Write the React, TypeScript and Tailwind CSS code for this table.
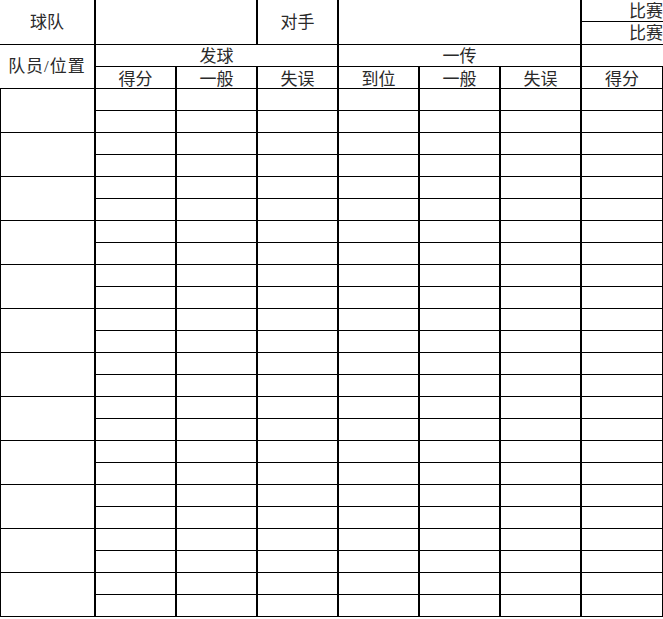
const subHeads = ['得分', '一般', '失误', '到位', '一般', '失误', '得分']

const font = { fontFamily: '"Liberation Serif", "Noto Sans CJK SC", serif' }

export default function App() {
    const players = Array.from({ length: 12 })

    return (
        <div className="w-[663px] h-[619px] bg-white overflow-hidden text-[17px] leading-none text-[#2a2a2a]" style={font}>
            <div className="grid grid-cols-[96px_81px_81px_81px_81px_81px_81px_81px] grid-rows-[22px_23px_22px_22px_repeat(24,22px)]">

                {/* top header */}
                <div className="col-start-1 row-start-1 row-span-2 border-b border-r-2 border-black flex items-center justify-center">球队</div>
                <div className="col-start-2 col-span-2 row-start-1 row-span-2 border-b border-r-2 border-black"></div>
                <div className="col-start-4 row-start-1 row-span-2 border-b border-r-2 border-black flex items-center justify-center">对手</div>
                <div className="col-start-5 col-span-3 row-start-1 row-span-2 border-b border-r-2 border-black"></div>
                <div className="col-start-8 row-start-1 border-b border-black flex items-center justify-end overflow-hidden pt-[1px]">比赛</div>
                <div className="col-start-8 row-start-2 border-b border-black flex items-center justify-end overflow-hidden pt-[1px]">比赛</div>

                {/* second header */}
                <div className="col-start-1 row-start-3 row-span-2 border-b border-r-2 border-black flex items-center justify-center tracking-[1px]">队员/位置</div>
                <div className="col-start-2 col-span-3 row-start-3 border-b border-r-2 border-black flex items-center justify-center pt-[2px]">发球</div>
                <div className="col-start-5 col-span-3 row-start-3 border-b border-r-2 border-black flex items-center justify-center pt-[2px]">一传</div>
                <div className="col-start-8 row-start-3 border-b border-black"></div>

                {subHeads.map((label, i) =>
                    <div key={i} className={`row-start-4 border-b border-black flex items-center justify-center pt-[3px] ${i == 6 ? 'border-r' : 'border-r-2'}`}>
                        {label}
                    </div>
                )}

                {/* players */}
                {players.map((_, p) =>
                    <PlayerRows key={p} />
                )}
            </div>
        </div>
    )
}

function PlayerRows() {
    const cols = Array.from({ length: 7 })
    return (
        <>
            <div className="col-start-1 row-span-2 border-b border-r-2 border-l border-black"></div>
            {cols.map((_, i) =>
                <div key={'a' + i} className={`border-b border-black ${i == 6 ? 'border-r' : 'border-r-2'}`}></div>
            )}
            {cols.map((_, i) =>
                <div key={'b' + i} className={`border-b border-black ${i == 0 ? 'col-start-2' : ''} ${i == 6 ? 'border-r' : 'border-r-2'}`}></div>
            )}
        </>
    )
}
